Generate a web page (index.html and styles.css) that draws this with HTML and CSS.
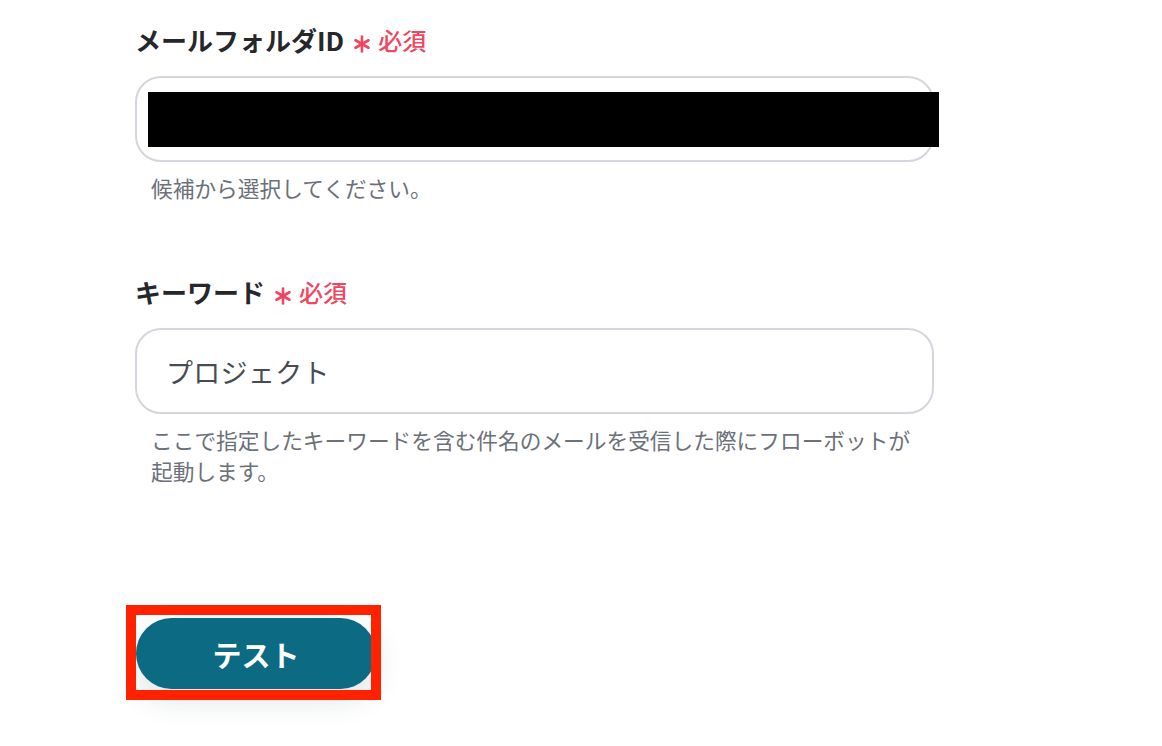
FILE: index.html
```html
<!DOCTYPE html>
<html lang="ja">
<head>
<meta charset="utf-8">
<link rel="stylesheet" href="styles.css">
</head>
<body>
<main class="form">
  <section class="field field-first">
    <div class="label-row">
      <span class="label">メールフォルダID</span>
      <svg class="asterisk" width="18" height="18" viewBox="0 0 18 18" aria-hidden="true">
        <g stroke="#f0465f" stroke-width="2.6" stroke-linecap="round">
          <line x1="9" y1="1.5" x2="9" y2="16.5"/>
          <line x1="2.5" y1="5.25" x2="15.5" y2="12.75"/>
          <line x1="2.5" y1="12.75" x2="15.5" y2="5.25"/>
        </g>
      </svg>
      <span class="required">必須</span>
    </div>
    <div class="input">
      <div class="redact"></div>
    </div>
    <p class="help">候補から選択してください。</p>
  </section>

  <section class="field field-second">
    <div class="label-row">
      <span class="label">キーワード</span>
      <svg class="asterisk" width="18" height="18" viewBox="0 0 18 18" aria-hidden="true">
        <g stroke="#f0465f" stroke-width="2.6" stroke-linecap="round">
          <line x1="9" y1="1.5" x2="9" y2="16.5"/>
          <line x1="2.5" y1="5.25" x2="15.5" y2="12.75"/>
          <line x1="2.5" y1="12.75" x2="15.5" y2="5.25"/>
        </g>
      </svg>
      <span class="required">必須</span>
    </div>
    <div class="input">
      <span class="value">プロジェクト</span>
    </div>
    <p class="help">ここで指定したキーワードを含む件名のメールを受信した際にフローボットが<br>起動します。</p>
  </section>

  <div class="actions">
    <div class="button-wrap">
      <button class="test-button" type="button">テスト</button>
    </div>
  </div>
</main>
</body>
</html>
```

FILE: styles.css
```css
html, body {
  margin: 0;
  padding: 0;
  background: #ffffff;
}

body {
  font-family: "Noto Sans CJK JP", "Noto Sans", sans-serif;
  width: 1162px;
  height: 746px;
  overflow: hidden;
}

.form {
  padding-left: 135px;
  padding-top: 22px;
}

.field {
  width: 799px;
}

.field-second {
  margin-top: 71px;
}

.label-row {
  display: flex;
  align-items: center;
  height: 36px;
}

.label {
  font-size: 26px;
  font-weight: 700;
  color: #25272b;
  line-height: 36px;
}

.asterisk {
  margin-left: 9px;
  margin-top: 8px;
}

.required {
  margin-left: 7px;
  font-size: 24px;
  font-weight: 500;
  color: #f0465f;
  line-height: 36px;
}

.input {
  margin-top: 18px;
  height: 86px;
  box-sizing: border-box;
  border: 2px solid #d3d7dd;
  border-radius: 26px;
  display: flex;
  align-items: center;
  background: #fff;
}

.redact {
  margin-left: 11px;
  width: 791px;
  height: 55px;
  flex: none;
  background: #000;
}

.value {
  margin-left: 29px;
  font-size: 27px;
  color: #474c54;
  letter-spacing: 0.3px;
}

.help {
  margin: 10px 0 0 16px;
  font-size: 21.7px;
  line-height: 31px;
  color: #6b7079;
}

.actions {
  margin-top: 132px;
}

.button-wrap {
  position: relative;
  display: inline-block;
}

.button-wrap::after {
  content: "";
  position: absolute;
  left: -9px;
  top: -13px;
  width: 235px;
  height: 75px;
  border: 10px solid #ff2200;
  pointer-events: none;
}

.test-button {
  display: block;
  margin-left: 1px;
  width: 240px;
  height: 71px;
  border: none;
  border-radius: 36px;
  background: #0c6a82;
  color: #ffffff;
  font-family: "Noto Sans CJK JP", "Noto Sans", sans-serif;
  font-size: 29px;
  font-weight: 700;
  box-shadow: 0 10px 30px rgba(30, 50, 70, 0.14);
}
```
